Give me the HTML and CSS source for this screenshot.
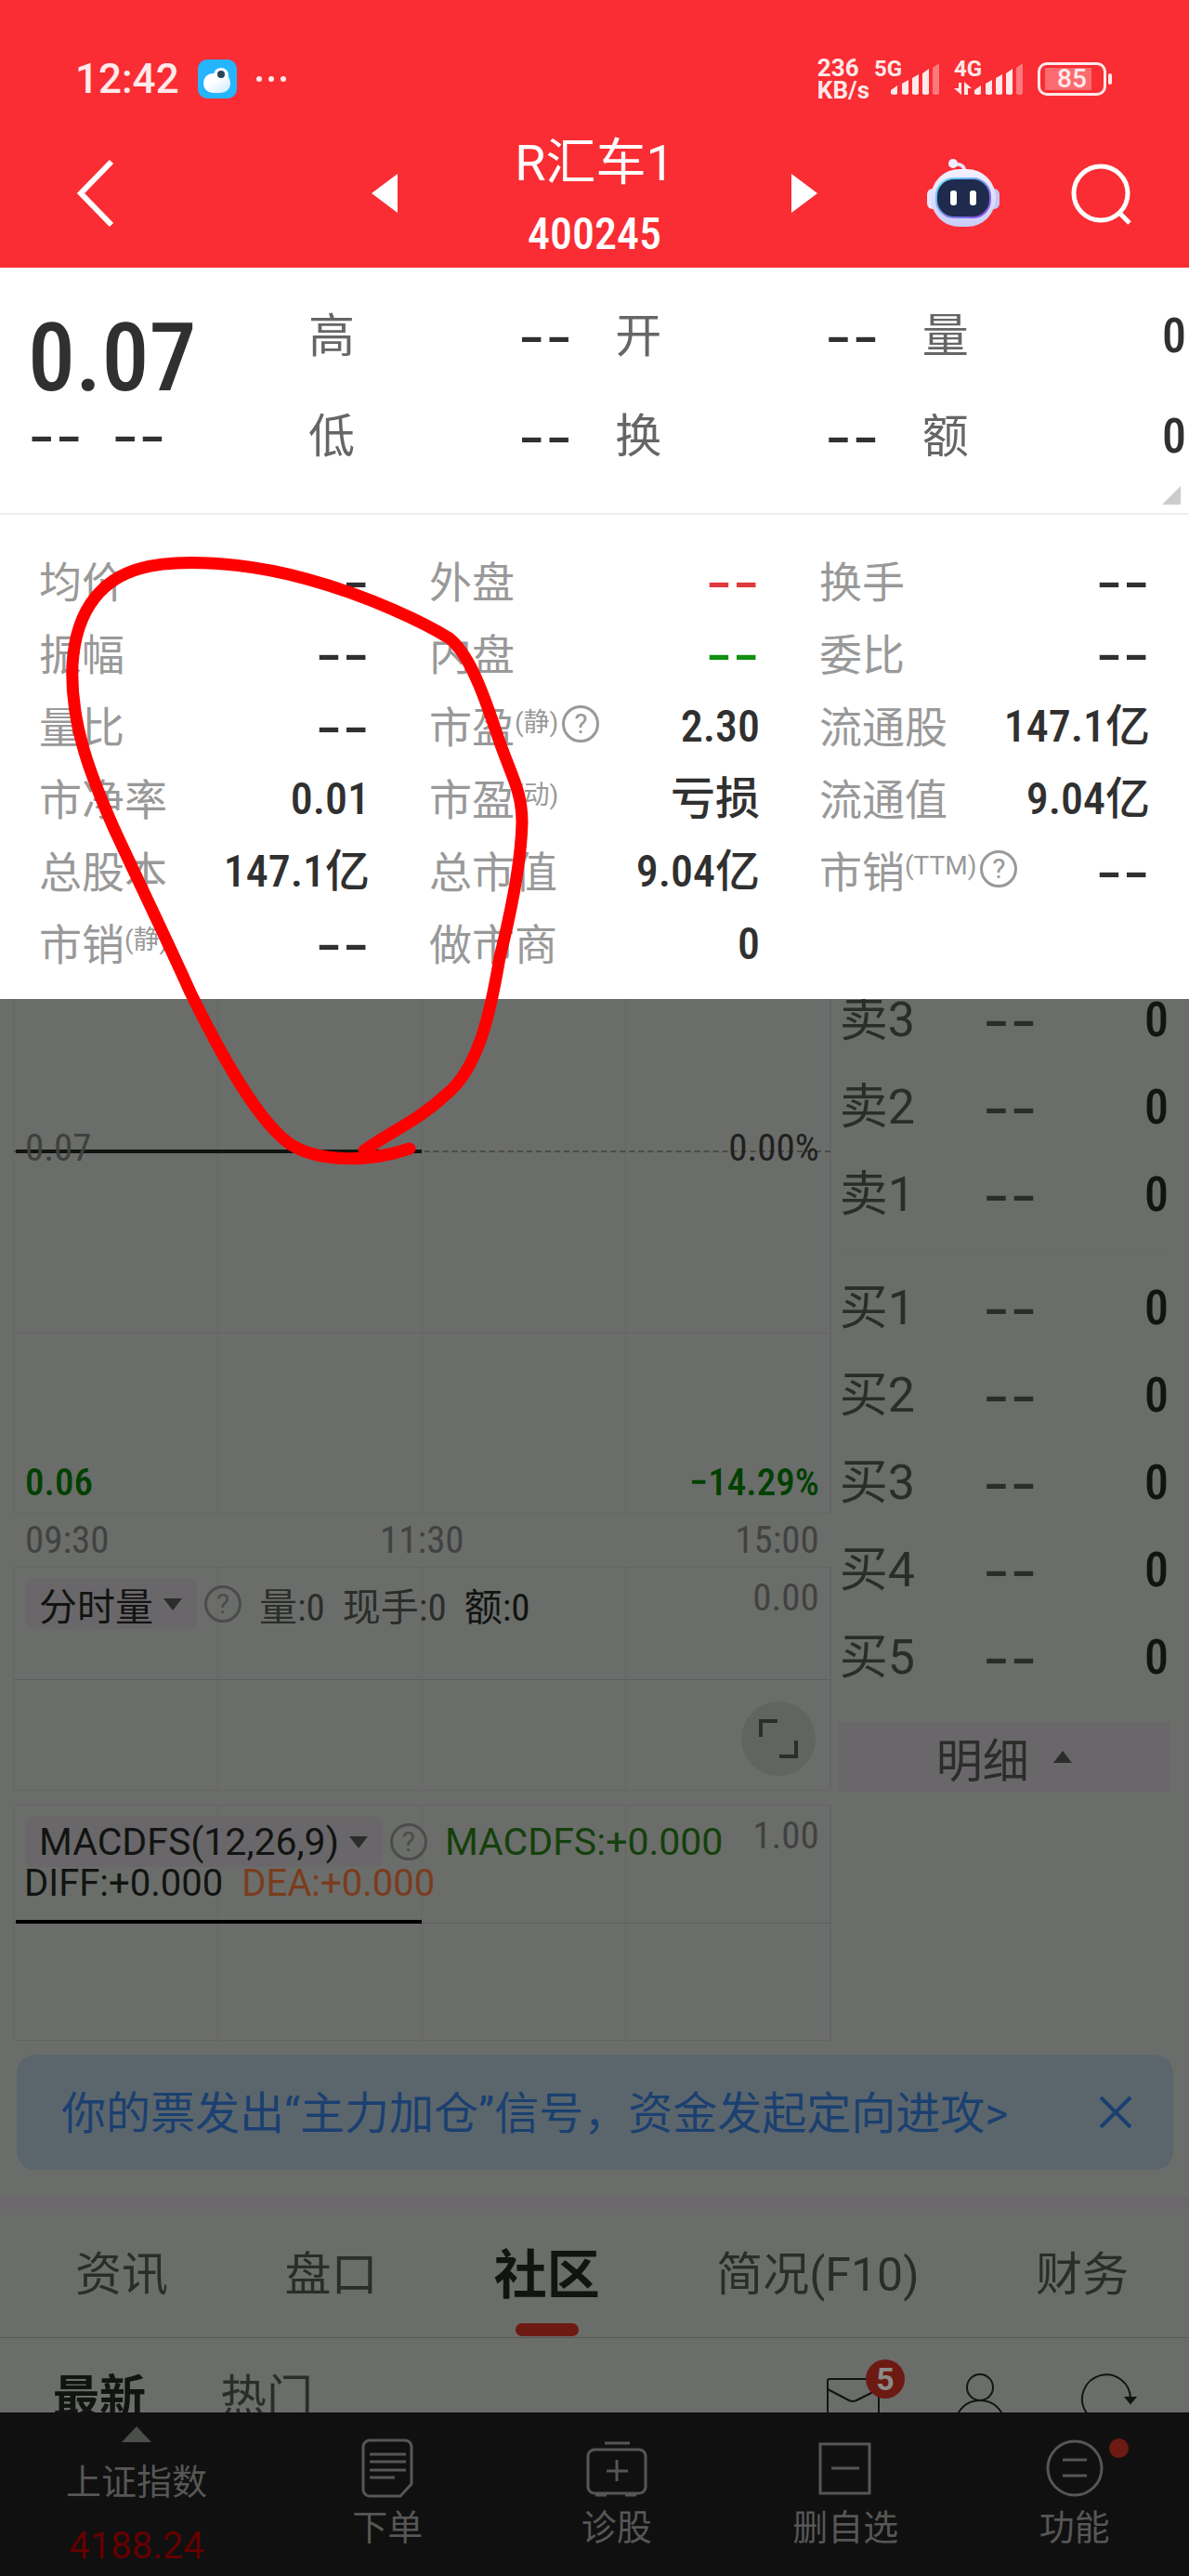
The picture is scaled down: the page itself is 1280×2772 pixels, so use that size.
FILE: index.html
```html
<!DOCTYPE html>
<html lang="zh-CN">

<head>
    <meta charset="UTF-8" />
    <meta name="viewport" content="width=device-width, initial-scale=1" />
    <title>R汇车1 400245</title>
    <link rel="stylesheet" href="styles.css">
</head>
<body>
    <div class="page">
        <header class="header">
            <div class="status-bar">
                <span class="clock">12:42</span>
                <svg class="app-icon" width="42" height="42" viewBox="0 0 42 42">
                    <defs>
                        <linearGradient id="cloud" x1="0" y1="0" x2="1" y2="1">
                            <stop offset="0.4" stop-color="#fff" />
                            <stop offset="1" stop-color="#c9e9fb" />
                        </linearGradient>
                    </defs>
                    <rect width="42" height="42" rx="10" fill="#26b4fd" />
                    <circle cx="25" cy="17" r="8" fill="#f4fbff" />
                    <rect x="6" y="15" width="29" height="21" rx="10" fill="url(#cloud)" />
                    <circle cx="25" cy="16" r="4" fill="#27465c" />
                </svg>
                <svg width="34" height="8" viewBox="0 0 34 8" fill="#ffe9ea">
                    <circle cx="4" cy="4" r="3" /><circle cx="17" cy="4" r="3" /><circle cx="30" cy="4" r="3" />
                </svg>
                <span class="net-speed">236<br>KB/s</span>
                <div class="signal">
                    <span>5G</span>
                    <svg width="70" height="42" viewBox="0 0 70 42" fill="#ffe9ea">
                        <path d="M18 37v-4l7-5v9q-3 2-7 0zM30 37V26l7-4v15q-3 2-7 0zM41 37V20l7-4v21q-3 2-7 0zM52 37V15l7-5v27q-3 2-7 0z" />
                        <path d="M63 37V9l7-5v33q-3 2-7 0z" opacity=".4" />
                    </svg>
                </div>
                <div class="signal">
                    <span>4G</span>
                    <svg width="74" height="42" viewBox="0 0 74 42" fill="#ffe9ea">
                        <path d="M5 25h3v13L0 31h5zM11 38V24l8 7h-4v7z" />
                        <path d="M22 37v-4l7-5v9q-3 2-7 0zM34 37V26l7-4v15q-3 2-7 0zM45 37V20l7-4v21q-3 2-7 0zM56 37V15l7-5v27q-3 2-7 0z" />
                        <path d="M67 37V9l7-5v33q-3 2-7 0z" opacity=".4" />
                    </svg>
                </div>
                <span class="battery">85</span>
            </div>

            <div class="title-bar">
                <button class="icon-button" aria-label="返回">
                    <svg width="44" height="74" viewBox="0 0 44 74" fill="none" stroke="#fff" stroke-width="6">
                        <path d="M40 3L7 37l33 34" />
                    </svg>
                </button>
                <div class="switcher">
                    <button class="icon-button" aria-label="上一只">
                        <svg width="28" height="42" viewBox="0 0 28 42" fill="#fff"><path d="M28 0v42L0 21z" /></svg>
                    </button>
                    <div class="stock">
                        <h1>R汇车1</h1>
                        <p class="num">400245</p>
                    </div>
                    <button class="icon-button" aria-label="下一只">
                        <svg width="28" height="42" viewBox="0 0 28 42" fill="#fff"><path d="M0 0v42l28-21z" /></svg>
                    </button>
                </div>
                <button class="icon-button" aria-label="智能助手">
                    <svg width="78" height="74" viewBox="0 0 78 74">
                        <defs>
                            <linearGradient id="head" x1="0" y1="0" x2="0" y2="1">
                                <stop offset="0" stop-color="#f4f1ff" />
                                <stop offset="1" stop-color="#c9ccf7" />
                            </linearGradient>
                            <linearGradient id="rim" x1="0" y1="0" x2="1" y2="1">
                                <stop offset="0" stop-color="#63e3f5" />
                                <stop offset="1" stop-color="#8b45e6" />
                            </linearGradient>
                        </defs>
                        <path d="M29 6q11-2 12 9" fill="none" stroke="#e6e2fa" stroke-width="4" />
                        <circle cx="28" cy="5" r="5" fill="#f1eefe" />
                        <rect x="0" y="32" width="12" height="22" rx="6" fill="#e6e4fd" />
                        <rect x="66" y="32" width="12" height="22" rx="6" fill="#c5c8f6" />
                        <rect x="4" y="11" width="70" height="62" rx="31" fill="url(#head)" />
                        <rect x="10" y="21" width="58" height="42" rx="19" fill="#1f2a4d" stroke="url(#rim)" stroke-width="2" />
                        <rect x="25" y="34" width="7" height="16" rx="3" fill="#fff" />
                        <rect x="46" y="34" width="7" height="16" rx="3" fill="#fff" />
                    </svg>
                </button>
                <button class="icon-button" aria-label="搜索">
                    <svg width="68" height="68" viewBox="0 0 68 68" fill="none" stroke="#fff" stroke-width="5">
                        <circle cx="33" cy="34" r="29" />
                        <path d="M53 55l11 11" />
                    </svg>
                </button>
            </div>
        </header>

        <section class="quote">
            <div class="price">
                <strong class="num">0.07</strong>
                <div class="change"><span class="dash">--</span><span class="dash">--</span></div>
            </div>
            <dl>
                <div><dt>高</dt><dd class="dash">--</dd></div>
                <div><dt>开</dt><dd class="dash">--</dd></div>
                <div><dt>量</dt><dd class="num">0</dd></div>
                <div><dt>低</dt><dd class="dash">--</dd></div>
                <div><dt>换</dt><dd class="dash">--</dd></div>
                <div><dt>额</dt><dd class="num">0</dd></div>
            </dl>
            <i class="corner"></i>
        </section>

        <dl class="details">
            <div><dt>均价</dt><dd class="dash">--</dd></div>
            <div><dt>外盘</dt><dd class="dash red">--</dd></div>
            <div><dt>换手</dt><dd class="dash">--</dd></div>
            <div><dt>振幅</dt><dd class="dash">--</dd></div>
            <div><dt>内盘</dt><dd class="dash green">--</dd></div>
            <div><dt>委比</dt><dd class="dash">--</dd></div>
            <div><dt>量比</dt><dd class="dash">--</dd></div>
            <div><dt>市盈<small>(静)</small><i class="help">?</i></dt><dd class="num">2.30</dd></div>
            <div><dt>流通股</dt><dd class="num">147.1亿</dd></div>
            <div><dt>市净率</dt><dd class="num">0.01</dd></div>
            <div><dt>市盈<small>(动)</small></dt><dd class="num">亏损</dd></div>
            <div><dt>流通值</dt><dd class="num">9.04亿</dd></div>
            <div><dt>总股本</dt><dd class="num">147.1亿</dd></div>
            <div><dt>总市值</dt><dd class="num">9.04亿</dd></div>
            <div><dt>市销<small>(TTM)</small><i class="help">?</i></dt><dd class="dash">--</dd></div>
            <div><dt>市销<small>(静)</small></dt><dd class="dash">--</dd></div>
            <div><dt>做市商</dt><dd class="num">0</dd></div>
        </dl>

        <main class="dimmed">
            <section class="market">
                <div class="charts">
                    <div class="plot price-plot">
                        <div class="band band-top"></div>
                        <div class="band band-mid"></div>
                        <div class="band band-low"></div>
                        <i class="trend"></i>
                        <div class="axis axis-zero num"><span>0.07</span><span class="dark">0.00%</span></div>
                        <div class="axis axis-low num"><span>0.06</span><span>−14.29%</span></div>
                    </div>
                    <div class="times num"><span>09:30</span><span>11:30</span><span>15:00</span></div>

                    <div class="plot volume-plot">
                        <div class="plot-head">
                            <button class="chip">分时量<i class="caret"></i></button>
                            <i class="help">?</i>
                            <span>量<b class="num">:0</b></span>
                            <span>现手<b class="num">:0</b></span>
                            <span class="black">额<b class="num">:0</b></span>
                            <span class="scale num">0.00</span>
                        </div>
                        <div class="halves"></div>
                        <button class="expand" aria-label="全屏">
                            <svg width="44" height="44" viewBox="0 0 44 44" fill="none" stroke="#2b2d2a" stroke-width="4">
                                <path d="M3 20V3h18M41 24v17H23" />
                            </svg>
                        </button>
                    </div>

                    <div class="plot macd-plot">
                        <div class="plot-head">
                            <button class="chip">MACDFS(12,26,9)<i class="caret"></i></button>
                            <i class="help">?</i>
                            <span class="macd">MACDFS:+0.000</span>
                            <span class="scale num">1.00</span>
                        </div>
                        <div class="macd-line">
                            <span class="black">DIFF:+0.000</span>
                            <span class="dea">DEA:+0.000</span>
                        </div>
                        <div class="halves"></div>
                        <i class="trend"></i>
                    </div>
                </div>

                <div class="orders">
                    <table>
                        <tr><th>卖3</th><td class="dash">--</td><td class="num">0</td></tr>
                        <tr><th>卖2</th><td class="dash">--</td><td class="num">0</td></tr>
                        <tr><th>卖1</th><td class="dash">--</td><td class="num">0</td></tr>
                    </table>
                    <hr>
                    <table>
                        <tr><th>买1</th><td class="dash">--</td><td class="num">0</td></tr>
                        <tr><th>买2</th><td class="dash">--</td><td class="num">0</td></tr>
                        <tr><th>买3</th><td class="dash">--</td><td class="num">0</td></tr>
                        <tr><th>买4</th><td class="dash">--</td><td class="num">0</td></tr>
                        <tr><th>买5</th><td class="dash">--</td><td class="num">0</td></tr>
                    </table>
                    <button class="more">明细<i class="caret up"></i></button>
                </div>
            </section>

            <div class="banner">
                <a href="#">你的票发出“主力加仓”信号，资金发起定向进攻&gt;</a>
                <button class="icon-button" aria-label="关闭">
                    <svg width="36" height="36" viewBox="0 0 36 36" fill="none" stroke="#1b4070" stroke-width="4">
                        <path d="M2 2l32 32M34 2L2 34" />
                    </svg>
                </button>
            </div>

            <nav class="tabs">
                <a href="#">资讯</a>
                <a href="#">盘口</a>
                <a href="#" class="active">社区</a>
                <a href="#">简况(F10)</a>
                <a href="#">财务</a>
            </nav>

            <div class="sub-tabs">
                <a href="#" class="active">最新</a>
                <a href="#">热门</a>
                <div class="actions">
                    <button class="icon-button mail" aria-label="消息">
                        <svg width="60" height="60" viewBox="0 0 60 60" fill="none" stroke="#111411" stroke-width="2">
                            <rect x="2" y="8" width="55" height="44" rx="2" />
                            <path d="M2 19l23 12q4 2 8 0l24-12" />
                        </svg>
                        <span class="badge">5</span>
                    </button>
                    <button class="icon-button" aria-label="我的">
                        <svg width="60" height="60" viewBox="0 0 60 60" fill="none" stroke="#111411" stroke-width="2">
                            <circle cx="29" cy="17" r="14" />
                            <path d="M2 58c2-36 52-36 54 0" />
                        </svg>
                    </button>
                    <button class="icon-button" aria-label="刷新">
                        <svg width="60" height="60" viewBox="0 0 60 60" fill="none" stroke="#111411" stroke-width="2">
                            <path d="M54 30A26 26 0 1 0 48 46" />
                            <path d="M49 28h10l-5 6z" fill="#111411" />
                        </svg>
                    </button>
                </div>
            </div>
        </main>

        <nav class="bottom-nav">
            <button class="index">
                <i class="caret up"></i>
                <span>上证指数</span>
                <span class="index-value">4188.24</span>
            </button>
            <button>
                <svg width="64" height="64" viewBox="0 0 64 64" fill="none" stroke="#565655" stroke-width="3">
                    <path d="M13 2h38a7 7 0 0 1 7 7v40L46 62H13a7 7 0 0 1-7-7V9a7 7 0 0 1 7-7z" />
                    <path d="M13 17h39M13 25h39M13 34h39M13 42h27" />
                </svg>
                <span>下单</span>
            </button>
            <button>
                <svg width="68" height="64" viewBox="0 0 68 64" fill="none" stroke="#565655" stroke-width="3">
                    <rect x="3" y="12" width="62" height="47" rx="7" />
                    <path d="M21 5h27M34 23v23M23 35h23M11 61h12M43 61h12" />
                </svg>
                <span>诊股</span>
            </button>
            <button>
                <svg width="64" height="64" viewBox="0 0 64 64" fill="none" stroke="#565655" stroke-width="3">
                    <rect x="5" y="6" width="53" height="53" />
                    <path d="M17 32h30" />
                </svg>
                <span>删自选</span>
            </button>
            <button class="more-tools">
                <svg width="64" height="64" viewBox="0 0 64 64" fill="none" stroke="#565655" stroke-width="3">
                    <circle cx="32" cy="32" r="29" />
                    <path d="M19 23h26M19 40h26" />
                </svg>
                <span>功能</span>
            </button>
        </nav>

        <!-- hand-drawn mark -->
        <svg class="mark" width="600" height="1280" viewBox="0 0 600 1280" fill="none" stroke="#ff0000" stroke-width="13" stroke-linecap="round" stroke-linejoin="round">
            <path d="M441 1236C400 1250 345 1252 312 1231C275 1205 233 1125 205 1068C180 1012 145 940 122 890C100 840 75 780 78 715C82 650 115 622 150 612C190 600 265 605 330 623C400 642 460 672 484 687C505 704 520 745 535 790C550 835 562 850 562 885C561 930 548 990 538 1030C528 1090 515 1150 480 1178C450 1206 420 1218 392 1238" />
        </svg>
    </div>
</body>
</html>
```

FILE: styles.css
```css
* {
    box-sizing: border-box;
}

body {
    margin: 0;
    background: #101010;
    color: #303030;
    font-family: Roboto, "Noto Sans CJK SC", sans-serif;
}

button {
    padding: 0;
    border: none;
    background: none;
    color: inherit;
    font: inherit;
    cursor: pointer;
}

a {
    color: inherit;
    text-decoration: none;
}

dl,
dd,
h1,
p {
    margin: 0;
}

i {
    font-style: normal;
}

svg {
    display: block;
}

.page {
    position: relative;
    overflow: hidden;
}

.num {
    font-family: "Roboto Condensed", "Liberation Sans Narrow", Roboto, "Noto Sans CJK SC", sans-serif;
}

.dash {
    font-family: Inter, sans-serif;
    font-size: 64px;
}

/* header */
.header {
    height: 288px;
    padding-top: 60px;
    background: #f92d33;
    color: #fff;
}

.status-bar {
    display: flex;
    align-items: center;
    height: 50px;
    padding: 0 89px 0 81px;
    color: #ffe9ea;
}

.clock {
    font-size: 44px;
    font-weight: 500;
}

.app-icon {
    margin: 0 20px;
}

.net-speed {
    margin-left: auto;
    font-size: 26px;
    line-height: 24px;
    font-weight: 700;
}

.signal {
    position: relative;
    margin-left: 5px;
}

.signal + .signal {
    margin-left: 16px;
}

.signal span {
    position: absolute;
    top: -2px;
    left: 0;
    font-size: 24px;
    line-height: 24px;
    font-weight: 700;
}

.battery {
    position: relative;
    width: 74px;
    height: 36px;
    margin-left: 16px;
    border: 3px solid #ffe9ea;
    border-radius: 10px;
    background: linear-gradient(to right, #fb6b70 50px, transparent 50px) 5px 3px / 58px 24px no-repeat;
    font-size: 28px;
    line-height: 30px;
    font-weight: 500;
    text-align: center;
}

.battery::after {
    content: "";
    position: absolute;
    top: 9px;
    right: -9px;
    width: 4px;
    height: 12px;
    border-radius: 2px;
    background: #ffe9ea;
}

.title-bar {
    display: flex;
    align-items: center;
    gap: 76px;
    height: 196px;
    padding: 0 60px 0 80px;
}

.switcher {
    display: flex;
    align-items: center;
    justify-content: space-between;
    width: 480px;
    margin: 0 auto 0 200px;
}

.stock {
    padding-top: 12px;
    text-align: center;
}

h1 {
    font-size: 54px;
    line-height: 76px;
    font-weight: 400;
}

.stock p {
    font-size: 48px;
    line-height: 76px;
    font-weight: 500;
}

/* quote */
.quote {
    position: relative;
    display: flex;
    height: 266px;
    padding: 19px 3px 0 30px;
    border-bottom: 2px solid #eee;
    background: #fff;
}

.price {
    width: 302px;
    padding-top: 20px;
}

.price strong {
    display: block;
    font-size: 102px;
    line-height: 116px;
    font-weight: 500;
}

.change {
    display: flex;
    gap: 31px;
}

.change .dash {
    line-height: 52px;
}

.quote dl {
    flex: 1;
    display: grid;
    grid-template-columns: repeat(3, 1fr);
    grid-auto-rows: 108px;
    column-gap: 46px;
}

.quote dl div,
.details div {
    display: flex;
    align-items: center;
    justify-content: space-between;
}

.quote dt {
    padding-bottom: 8px;
    color: #666;
    font-size: 50px;
}

.quote dd.num {
    font-size: 52px;
    font-weight: 500;
}

.corner {
    position: absolute;
    right: 9px;
    bottom: 9px;
    border-left: 20px solid transparent;
    border-bottom: 20px solid #ccc;
}

.details {
    display: grid;
    grid-template-columns: repeat(3, 1fr);
    grid-auto-rows: 78px;
    column-gap: 64px;
    padding: 33px 42px 20px;
    background: #fff;
}

.details dt {
    display: flex;
    align-items: center;
    padding-bottom: 6px;
    color: #999;
    font-size: 46px;
}

.details small {
    margin-bottom: 8px;
    font-size: 28px;
}

.details dd {
    line-height: 78px;
}

.details dd.num {
    font-size: 48px;
    font-weight: 500;
}

.red {
    color: #dd3b3d;
}

.green {
    color: #109010;
}

.help {
    width: 40px;
    height: 40px;
    margin-left: 4px;
    border: 3px solid currentColor;
    border-radius: 50%;
    font-size: 30px;
    line-height: 34px;
    text-align: center;
}

/* dimmed content */
.dimmed {
    background: #6b6d6a;
    color: #2b2d2a;
}

.market {
    display: flex;
    height: 1121px;
    padding: 0 15px 0 14px;
    overflow: hidden;
}

.charts {
    flex: none;
    width: 70.4%;
}

.plot {
    position: relative;
    border: 1px solid #656566;
    background: linear-gradient(to right, #646466 1px, transparent 1px) -1px 0 / 25% 100%;
}

.price-plot {
    border-top: none;
}

.band {
    border-bottom: 1px solid #646466;
}

.band-top {
    height: 165px;
    border-bottom: 2px dashed #4b4c4a;
}

.band-mid {
    height: 195px;
}

.band-low {
    height: 193px;
    border-bottom: none;
}

.trend {
    position: absolute;
    top: 162px;
    left: 2px;
    right: 50%;
    height: 4px;
    background: #111411;
}

.axis {
    position: absolute;
    left: 12px;
    right: 12px;
    display: flex;
    justify-content: space-between;
    color: #3f403f;
    font-size: 41px;
    line-height: 48px;
}

.axis-zero {
    top: 136px;
}

.axis-low {
    top: 496px;
    color: #004000;
    font-weight: 500;
}

.dark {
    color: #1f201f;
}

.times {
    display: flex;
    justify-content: space-between;
    padding: 0 13px;
    color: #414241;
    font-size: 41px;
    line-height: 57px;
}

.plot-head {
    display: flex;
    align-items: center;
    height: 54px;
    margin: 12px 12px 0;
    font-size: 41px;
    white-space: nowrap;
}

.plot-head span {
    margin-left: 19px;
}

.plot-head b {
    font-weight: 400;
}

.plot-head .help {
    margin-left: 8px;
    color: #4b4c4b;
}

.plot-head .scale {
    align-self: flex-start;
    margin-left: auto;
    color: #414241;
    line-height: 41px;
}

.chip {
    display: flex;
    align-items: center;
    gap: 11px;
    height: 54px;
    padding: 0 16px 0 15px;
    border-radius: 8px;
    background: #6a676a;
    color: #111411;
}

.caret {
    border: 10px solid transparent;
    border-top: 13px solid #2b2d2a;
    border-bottom: none;
}

.caret.up {
    border-top: none;
    border-bottom: 13px solid #2b2d2a;
}

.black {
    color: #111411;
}

.volume-plot {
    height: 241px;
    margin-bottom: 15px;
}

.macd-plot {
    height: 254px;
}

.halves {
    position: absolute;
    top: 50%;
    left: 0;
    right: 0;
    border-top: 1px solid #5c5d5e;
}

.expand {
    position: absolute;
    right: 16px;
    bottom: 15px;
    display: flex;
    align-items: center;
    justify-content: center;
    width: 80px;
    height: 80px;
    border-radius: 50%;
    background: #626461;
}

.macd {
    color: #14400c;
}

.macd-line {
    display: flex;
    gap: 20px;
    padding-left: 11px;
    font-size: 40px;
    line-height: 36px;
}

.dea {
    color: #7a3c1e;
}

.macd-plot .trend {
    top: 123px;
    background: #000;
}

.orders {
    flex: 1;
    margin-top: -24px;
    padding: 0 5px 0 7px;
}

.orders table {
    width: 100%;
    border-collapse: collapse;
}

.orders td,
.orders th {
    height: 94px;
    padding: 0 2px;
    text-align: left;
    font-size: 52px;
    line-height: 80px;
    font-weight: 400;
}

.orders th {
    width: 154px;
}

.orders .dash {
    font-size: 64px;
}

.orders td:last-child {
    color: #111411;
    font-weight: 500;
    text-align: right;
}

.orders hr {
    margin: 14px 0 13px;
    border: none;
    border-top: 1px solid #676868;
}

.more {
    display: flex;
    align-items: center;
    justify-content: center;
    gap: 26px;
    width: 100%;
    height: 75px;
    margin-top: 22px;
    background: #6a676a;
    font-size: 50px;
}

.banner {
    display: flex;
    align-items: center;
    justify-content: space-between;
    height: 124px;
    margin: 15px 17px 28px 18px;
    padding: 0 44px 0 48px;
    border-radius: 20px;
    background: #5b666c;
    color: #1b4070;
    font-size: 48px;
}

.banner a {
    padding-bottom: 6px;
}

.tabs {
    display: flex;
    align-items: center;
    justify-content: space-between;
    height: 153px;
    padding: 0 65px 6px 81px;
    border-top: 14px solid #6a686b;
    border-bottom: 1px solid #585a57;
    font-size: 50px;
}

.tabs .active {
    position: relative;
    color: #111411;
    font-size: 57px;
    font-weight: 700;
}

.tabs .active::after {
    content: "";
    position: absolute;
    bottom: -30px;
    left: 50%;
    width: 68px;
    height: 14px;
    margin-left: -34px;
    border-radius: 7px;
    background: #6d1a13;
}

.sub-tabs {
    display: flex;
    gap: 80px;
    height: 80px;
    padding: 28px 57px 0;
    overflow: hidden;
    font-size: 50px;
    line-height: 72px;
}

.sub-tabs .active {
    color: #111411;
    font-weight: 700;
}

.actions {
    display: flex;
    gap: 77px;
    align-items: flex-start;
    margin: 8px 0 0 auto;
}

.actions svg {
    overflow: visible;
}

.mail {
    position: relative;
}

.badge {
    position: absolute;
    top: -13px;
    right: -25px;
    width: 42px;
    height: 42px;
    border-radius: 50%;
    background: #6d1a13;
    color: #8b8c8a;
    font-size: 34px;
    line-height: 42px;
    font-weight: 700;
}

/* bottom bar */
.bottom-nav {
    display: flex;
    height: 176px;
    background: #101010;
    color: #565655;
    font-size: 38px;
    line-height: 52px;
}

.bottom-nav button {
    position: relative;
    flex: 1;
    display: flex;
    flex-direction: column;
    align-items: center;
    gap: 6px;
    padding-top: 28px;
}

.bottom-nav .index {
    flex: 0 0 294px;
    gap: 17px;
    padding-top: 15px;
}

.index .caret.up {
    border-width: 0 16px 17px;
    border-bottom-color: #4c4e4b;
}

.index-value {
    color: #640000;
    font-size: 40px;
}

.more-tools::after {
    content: "";
    position: absolute;
    top: 28px;
    left: 50%;
    width: 21px;
    height: 21px;
    margin-left: 37px;
    border-radius: 50%;
    background: #6d1a13;
}

.mark {
    position: absolute;
    top: 0;
    left: 0;
    pointer-events: none;
}
```
